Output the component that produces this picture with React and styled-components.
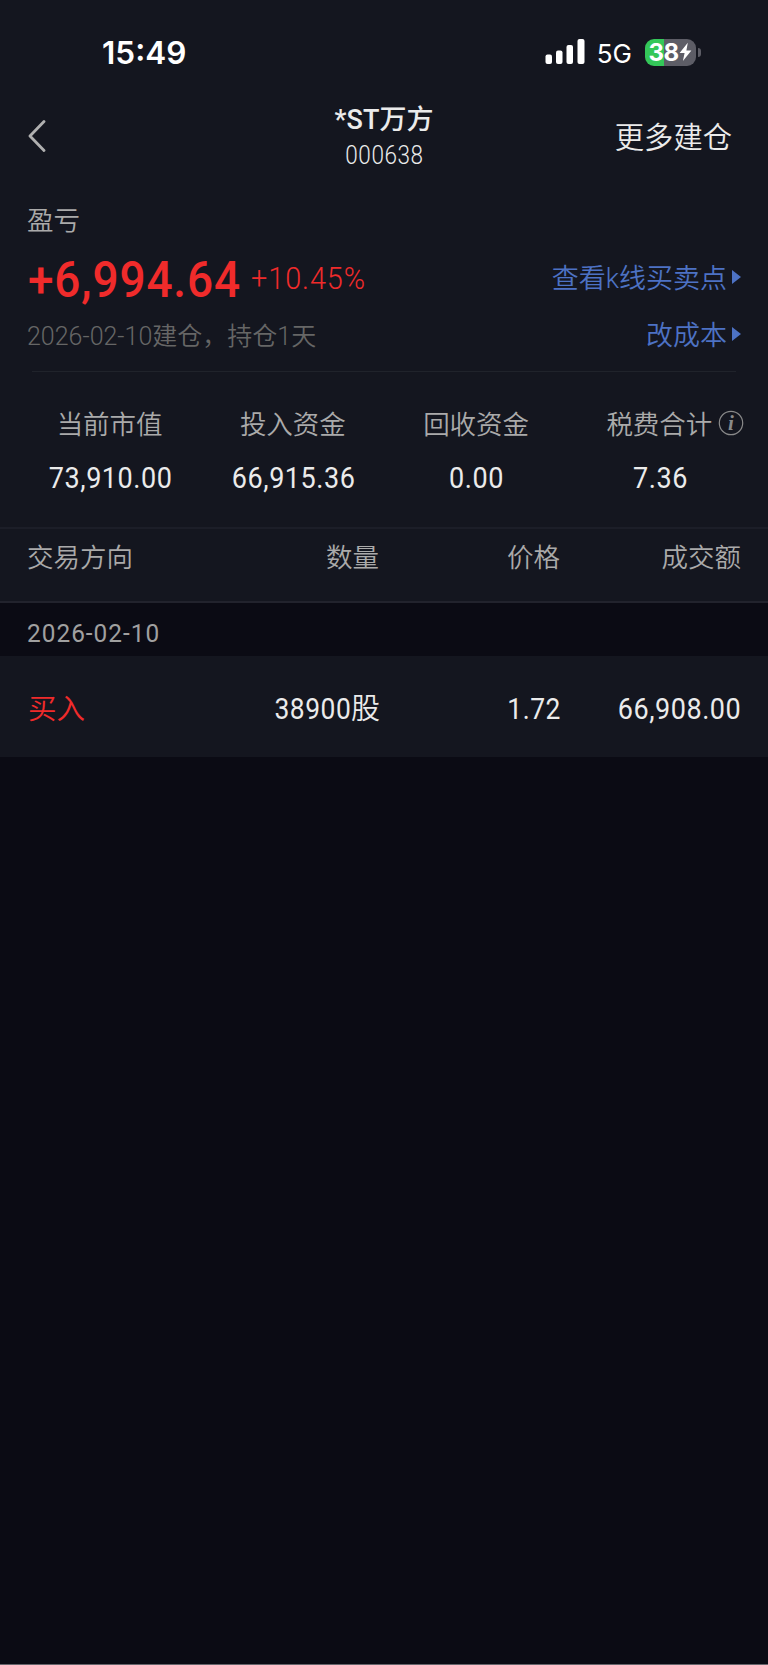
import React from 'react';
import styled, { createGlobalStyle } from 'styled-components';

const GlobalStyle = createGlobalStyle`
    * {
        box-sizing: border-box;
    }
    body {
        margin: 0;
        background: #0b0b14;
        font-family: Roboto, "Noto Sans CJK SC", sans-serif;
        color: #ebebeb;
    }
`

const Page = styled.div`
    display: flex;
    flex-direction: column;
    width: 768px;
    height: 1665px;
    overflow: hidden;
    white-space: nowrap;
    background: #0b0b14;
    border-bottom: 1px solid #66656c;
`

// Narrow figures, squeezed towards the side they are aligned to
const Num = styled.span`
    display: inline-block;
    letter-spacing: ${props => props.$spacing || 0.6}px;
    margin-right: -${props => props.$spacing || 0.6}px;
    transform: scaleX(${props => props.$squeeze || 0.9});
    transform-origin: ${props => props.$origin || 'center'};
`

const StatusBar = styled.div`
    display: flex;
    align-items: center;
    height: 99px;
    padding: 5px 67px 0 102px;
    background: #14161f;
    font-family: Inter, sans-serif;
    color: #ffffff;
`
const Clock = styled.div`
    flex: 1;
    padding-top: 1px;
    font-size: 31.5px;
    font-weight: 600;
`
const Network = styled.div`
    margin: 0 13px 0 12px;
    padding-top: 2px;
    font-size: 26px;
`
const Battery = styled.div`
    display: flex;
    align-items: center;
    justify-content: center;
    width: 51px;
    height: 27px;
    border-radius: 9px;
    background: linear-gradient(to right, #34c759 38%, #5d5d66 38%);
    font-size: 24px;
    font-weight: 700;
    letter-spacing: -0.6px;
`
const Bolt = styled.svg`
    flex: none;
    margin-left: 1px;
`
const BatteryTip = styled.div`
    width: 3px;
    height: 9px;
    margin-left: 2px;
    border-radius: 0 4px 4px 0;
    background: #5d5d66;
`

const NavBar = styled.div`
    display: grid;
    grid-template-columns: 1fr auto 1fr;
    grid-template-rows: 72px;
    align-items: center;
    height: 81px;
    padding: 0 36px;
    background: #14161f;
`
const BackButton = styled.div`
    display: flex;
    margin-left: -8px;
    padding-top: 1px;
`
const NavTitle = styled.div`
    padding-top: 4px;
    text-align: center;
`
const StockName = styled.div`
    font-size: 27px;
    font-weight: 500;
    line-height: 36px;
`
const StockCode = styled.div`
    font-size: 25px;
    line-height: 35px;
    font-weight: 350;
`
const MoreButton = styled.div`
    justify-self: end;
    font-size: 29.3px;
    font-weight: 350;
`

const Summary = styled.div`
    height: 192px;
    padding: 21px 27px 0 27px;
    background: #14161f;
`
const SummaryLabel = styled.div`
    font-size: 26.5px;
    line-height: 39px;
    font-weight: 350;
    color: #aaaaaa;
`
const SummaryRow = styled.div`
    display: flex;
    align-items: center;
    height: ${props => props.$height}px;
`
const Profit = styled.div`
    width: 224px;
    padding: 3px 0 0 1px;
    font-size: 50px;
    font-weight: 500;
    color: #f02b2b;
`
const ProfitRate = styled.div`
    flex: 1;
    padding-top: 1px;
    font-size: 31px;
    font-weight: 350;
    color: #f02b2b;
`
const OpenDate = styled.div`
    flex: 1;
    padding-bottom: 2px;
    font-size: 25px;
    font-weight: 350;
    color: #666666;
`
const BlueLink = styled.div`
    display: flex;
    align-items: center;
    gap: 5px;
    padding-top: 1px;
    font-size: 27px;
    line-height: 40px;
    font-weight: 350;
    color: #4d72c4;
`
const Triangle = styled.div`
    margin-bottom: 3px;
    border-left: 9px solid #4d72c4;
    border-top: 7.5px solid transparent;
    border-bottom: 7.5px solid transparent;
`
const Divider = styled.div`
    height: 1px;
    margin: 17px 5px 0;
    background: #20232b;
`

const Stats = styled.div`
    display: grid;
    grid-template-columns: repeat(4, 1fr);
    height: 157px;
    padding: 33px 17px 0 18px;
    border-bottom: 2px solid #1c1e28;
    background: #14161f;
    text-align: center;
`
const StatLabel = styled.div`
    position: relative;
    width: fit-content;
    margin: 0 auto;
    font-size: 26.5px;
    line-height: 40px;
    font-weight: 350;
    color: #aaaaaa;
`
const StatValue = styled.div`
    margin-top: 13px;
    padding-left: 1px;
    font-size: 30px;
    line-height: 40px;
`
// hangs beside the label so the label stays centred over its value
const InfoMark = styled.svg`
    position: absolute;
    left: 100%;
    top: 5px;
    margin-left: 6px;
`

const TableRow = styled.div`
    display: grid;
    grid-template-columns: 150px 202px 181px 181px;
    align-items: center;
    padding: 0 27px;
    text-align: right;
    background: #14161f;
`
const TableHead = styled(TableRow)`
    height: 74px;
    padding-bottom: 20px;
    border-bottom: 2px solid #22232d;
    font-size: 26.5px;
    font-weight: 350;
    color: #aaaaaa;
`
const TradeRow = styled(TableRow)`
    height: 101px;
    padding-top: 4px;
    font-size: 30px;
    line-height: 40px;
`
const Direction = styled.div`
    padding: 2px 0 0 1px;
    text-align: left;
    font-size: 28.5px;
    font-weight: 350;
    color: #f02b2b;
`
const HeadDirection = styled.div`
    text-align: left;
`
const Amount = styled.div`
    margin-right: -1px;
`
const Unit = styled.span`
    font-size: 29px;
    font-weight: 350;
`
const DateBand = styled.div`
    height: 53px;
    padding: 0 27px;
    font-size: 26.5px;
    line-height: 59px;
    color: #a0a0a0;
`

const stats = [
    { label: '当前市值', value: '73,910.00' },
    { label: '投入资金', value: '66,915.36' },
    { label: '回收资金', value: '0.00' },
    { label: '税费合计', value: '7.36', info: true },
]

const trades = [
    { date: '2026-02-10', direction: '买入', amount: '38900', price: '1.72', total: '66,908.00' },
]

function SignalIcon() {
    return (
        <svg width="40" height="26" viewBox="0 0 40 26" fill="#ffffff">
            <rect x="0.5" y="15.5" width="6.5" height="9.5" rx="2" />
            <rect x="11" y="11.5" width="6.5" height="13.5" rx="2" />
            <rect x="21.5" y="6" width="6.5" height="19" rx="2" />
            <rect x="32.5" y="0" width="7" height="25" rx="2" />
        </svg>
    )
}

function BoltIcon() {
    return (
        <Bolt width="13" height="20" viewBox="0 0 13 20" fill="#ffffff">
            <path d="M8.8 0.8 L0.6 11 H5.6 L3.9 19 L12.4 8.4 H7.4 Z" />
        </Bolt>
    )
}

function BackIcon() {
    return (
        <svg width="18" height="32" viewBox="0 0 18 32" fill="none" stroke="#b0b0b0" strokeWidth="2.8" strokeLinecap="round" strokeLinejoin="round">
            <path d="M16 1.5 L2 16 L16 30.5" />
        </svg>
    )
}

function InfoIcon() {
    return (
        <InfoMark width="26" height="26" viewBox="0 0 26 26">
            <circle cx="13" cy="13" r="11.7" fill="none" stroke="#8a8a8a" strokeWidth="1.2" />
            <text x="13" y="19.5" textAnchor="middle" fontFamily="Liberation Serif, serif" fontStyle="italic" fontWeight="700" fontSize="21" fill="#8a8a8a">i</text>
        </InfoMark>
    )
}

function App() {
    return (
        <Page>
            <GlobalStyle />
            <StatusBar>
                <Clock>15:49</Clock>
                <SignalIcon />
                <Network>5G</Network>
                <Battery>38<BoltIcon /></Battery>
                <BatteryTip />
            </StatusBar>

            <NavBar>
                <BackButton><BackIcon /></BackButton>
                <NavTitle>
                    <StockName>*ST万方</StockName>
                    <StockCode><Num>000638</Num></StockCode>
                </NavTitle>
                <MoreButton>更多建仓</MoreButton>
            </NavBar>

            <Summary>
                <SummaryLabel>盈亏</SummaryLabel>
                <SummaryRow $height={76}>
                    <Profit><Num $origin="left" $squeeze={0.92} $spacing={0.9}>+6,994.64</Num></Profit>
                    <ProfitRate><Num $origin="left" $squeeze={0.93} $spacing={1}>+10.45%</Num></ProfitRate>
                    <BlueLink>查看k线买卖点<Triangle /></BlueLink>
                </SummaryRow>
                <SummaryRow $height={38}>
                    <OpenDate>2026-02-10建仓，持仓1天</OpenDate>
                    <BlueLink>改成本<Triangle /></BlueLink>
                </SummaryRow>
                <Divider />
            </Summary>

            <Stats>
                {stats.map((item) => (
                    <div key={item.label}>
                        <StatLabel>
                            {item.label}
                            {item.info && <InfoIcon />}
                        </StatLabel>
                        <StatValue><Num>{item.value}</Num></StatValue>
                    </div>
                ))}
            </Stats>

            <TableHead>
                <HeadDirection>交易方向</HeadDirection>
                <div>数量</div>
                <div>价格</div>
                <div>成交额</div>
            </TableHead>

            {trades.map((trade) => (
                <div key={trade.date}>
                    <DateBand><Num $origin="left" $squeeze={0.92} $spacing={1.1}>{trade.date}</Num></DateBand>
                    <TradeRow>
                        <Direction>{trade.direction}</Direction>
                        <Amount><Num $origin="right" $squeeze={0.88}>{trade.amount}</Num><Unit>股</Unit></Amount>
                        <div><Num $origin="right" $squeeze={0.88}>{trade.price}</Num></div>
                        <div><Num $origin="right">{trade.total}</Num></div>
                    </TradeRow>
                </div>
            ))}
        </Page>
    )
}

export default App
